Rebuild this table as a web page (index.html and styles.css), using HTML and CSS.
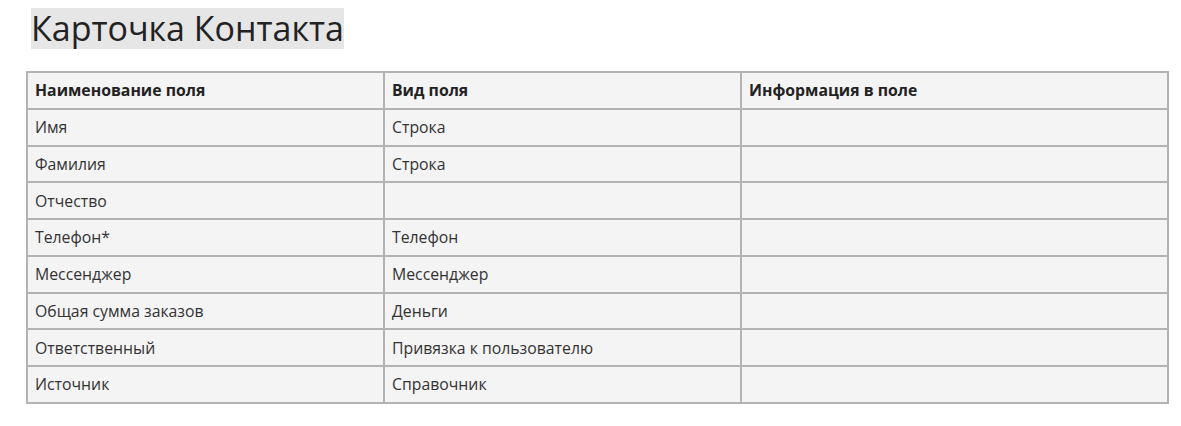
FILE: index.html
```html
<!DOCTYPE html>
<html lang="ru">
<head>
<meta charset="utf-8">
<link rel="stylesheet" href="styles.css">
</head>
<body>
<div class="page">
  <h1 class="title"><span>Карточка Контакта</span></h1>
  <table class="fields">
    <thead>
      <tr><th>Наименование поля</th><th>Вид поля</th><th>Информация в поле</th></tr>
    </thead>
    <tbody>
      <tr><td>Имя</td><td>Строка</td><td></td></tr>
      <tr><td>Фамилия</td><td>Строка</td><td></td></tr>
      <tr><td>Отчество</td><td></td><td></td></tr>
      <tr><td>Телефон*</td><td>Телефон</td><td></td></tr>
      <tr><td>Мессенджер</td><td>Мессенджер</td><td></td></tr>
      <tr><td>Общая сумма заказов</td><td>Деньги</td><td></td></tr>
      <tr><td>Ответственный</td><td>Привязка к пользователю</td><td></td></tr>
      <tr><td>Источник</td><td>Справочник</td><td></td></tr>
    </tbody>
  </table>
</div>
</body>
</html>
```
FILE: styles.css
```css
html, body {
  margin: 0;
  padding: 0;
  background: #ffffff;
}
body {
  font-family: "Open Sans", "Liberation Sans", sans-serif;
  color: #333;
}
.page {
  padding: 8px 12px 0 26px;
}
.title {
  margin: 0 0 22px 5px;
  font-size: 34px;
  font-weight: 400;
  line-height: 41px;
}
.title span {
  background: #e6e6e6;
  color: #222;
  display: inline-block;
}
.fields {
  border-collapse: collapse;
  width: 1143px;
  font-size: 15.8px;
  background: #f4f4f4;
  border: 2px solid #b3b3b3;
  color: #333;
}
.fields th, .fields td {
  border: 2px solid #b3b3b3;
  height: 34.75px;
  padding: 0 7px;
  text-align: left;
  vertical-align: middle;
}
.fields th {
  font-weight: 700;
  color: #222;
}
.fields th:nth-child(1) { width: 341px; }
.fields th:nth-child(2) { width: 341px; }
```
